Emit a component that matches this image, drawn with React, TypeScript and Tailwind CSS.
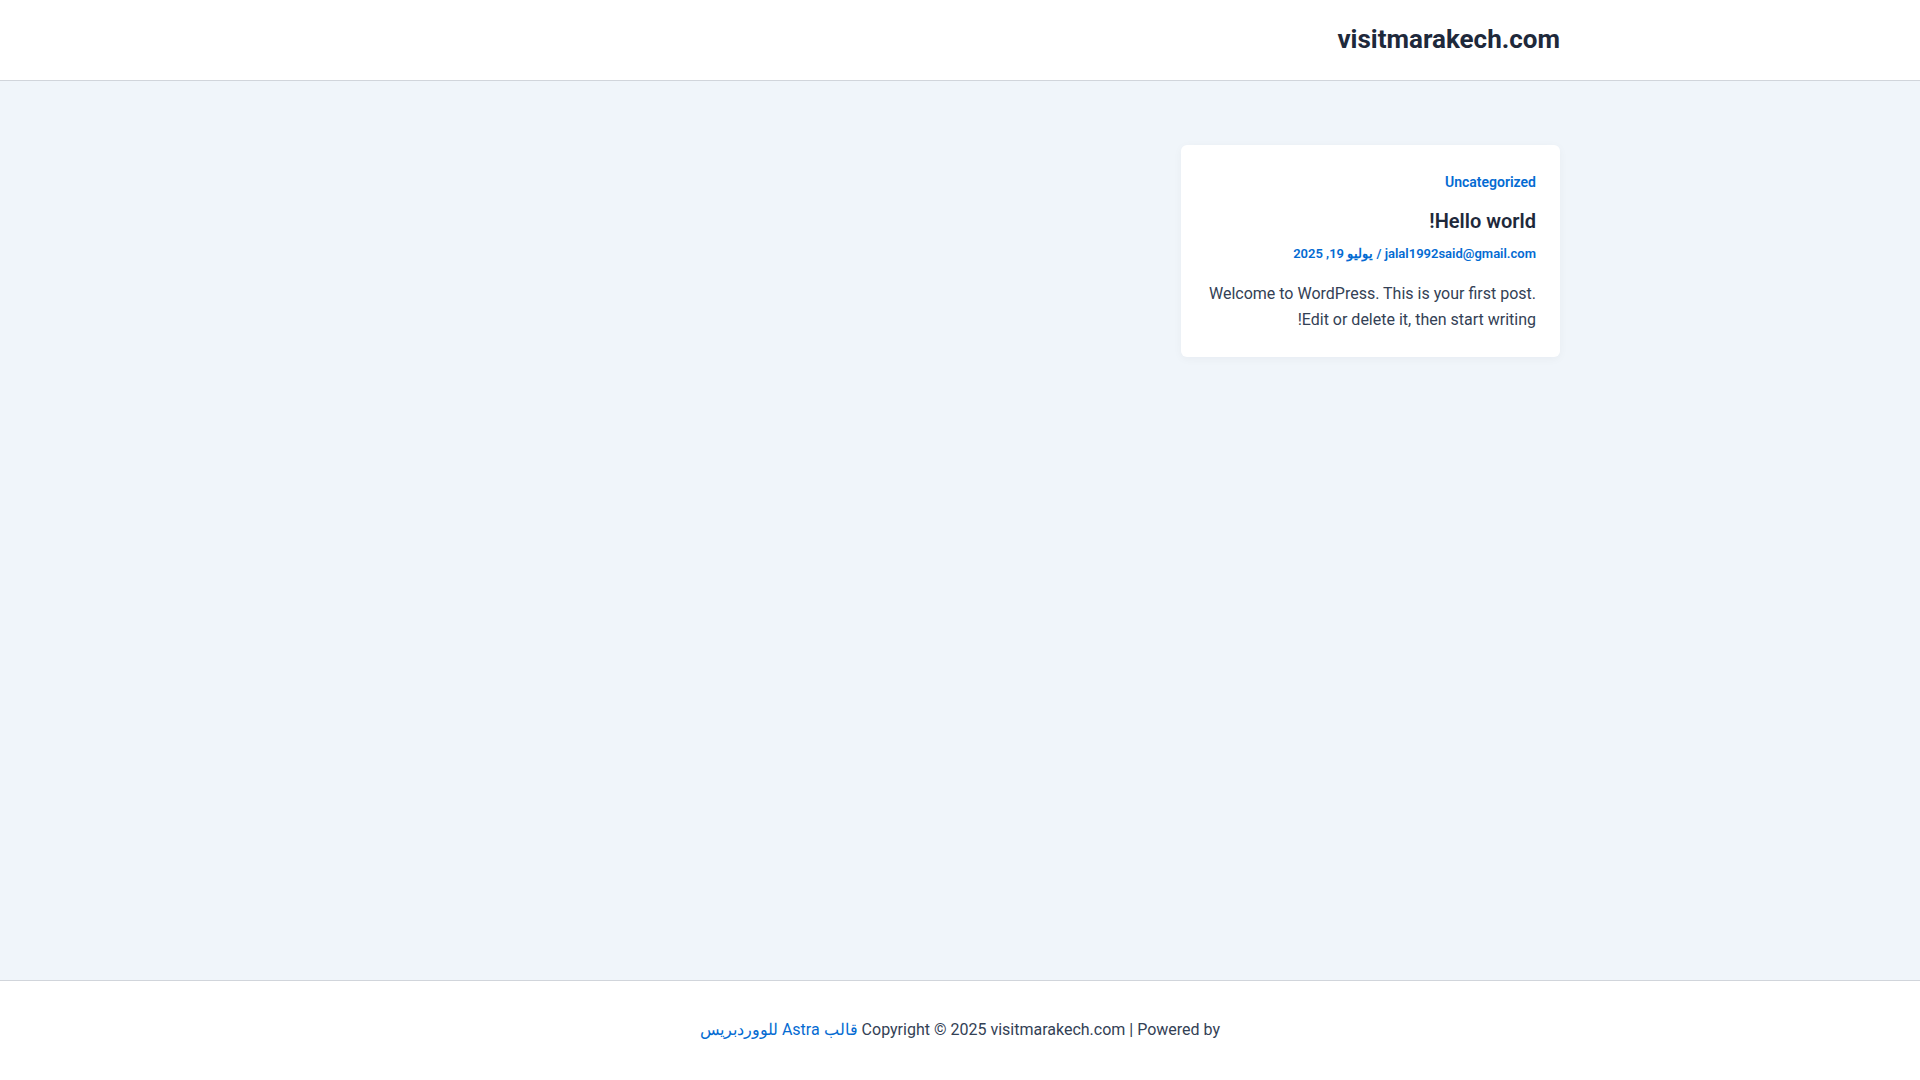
export default function App() {
  return (
    <div
      dir="rtl"
      className="min-h-screen flex flex-col bg-[#f0f5fa] text-[#334155]"
      style={{ fontFamily: "Roboto, 'Noto Sans', sans-serif" }}
    >
      <header className="bg-white border-b border-[#d1d5db]">
        <div className="max-w-[1200px] mx-auto h-20 flex items-center pb-[2px]">
          <a href="#" className="text-[26px] font-bold text-[#1e293b] leading-none">
            visitmarakech.com
          </a>
        </div>
      </header>

      <main className="flex-1">
        <div className="max-w-[1200px] mx-auto pt-16">
          <article className="w-[379px] bg-white rounded-md shadow-[0_2px_10px_rgba(15,23,42,0.04)] px-6 pt-6 pb-6">
            <a href="#" className="block text-[14px] leading-[26px] font-semibold text-[#046bd2]">
              Uncategorized
            </a>
            <h2 className="mt-[11px] text-[20px] leading-[30px] font-semibold text-[#1e293b]">
              Hello world!
            </h2>
            <div className="mt-2 text-[13px] leading-5 font-semibold text-[#046bd2]">
              <a href="#">jalal1992said@gmail.com</a> / <span>يوليو 19, 2025</span>
            </div>
            <p className="mt-[17px] text-[16px] leading-[26px]">
              Welcome to WordPress. This is your first post. Edit or delete it, then start writing!
            </p>
          </article>
        </div>
      </main>

      <footer className="h-[100px] bg-white border-t border-[#d1d5db] flex items-center justify-center pb-[2px]">
        <div className="text-[16px] text-[#334155]">
          Copyright © 2025 visitmarakech.com | Powered by{" "}
          <a href="#" className="text-[#046bd2]">
            قالب Astra للووردبريس
          </a>
        </div>
      </footer>
    </div>
  );
}
